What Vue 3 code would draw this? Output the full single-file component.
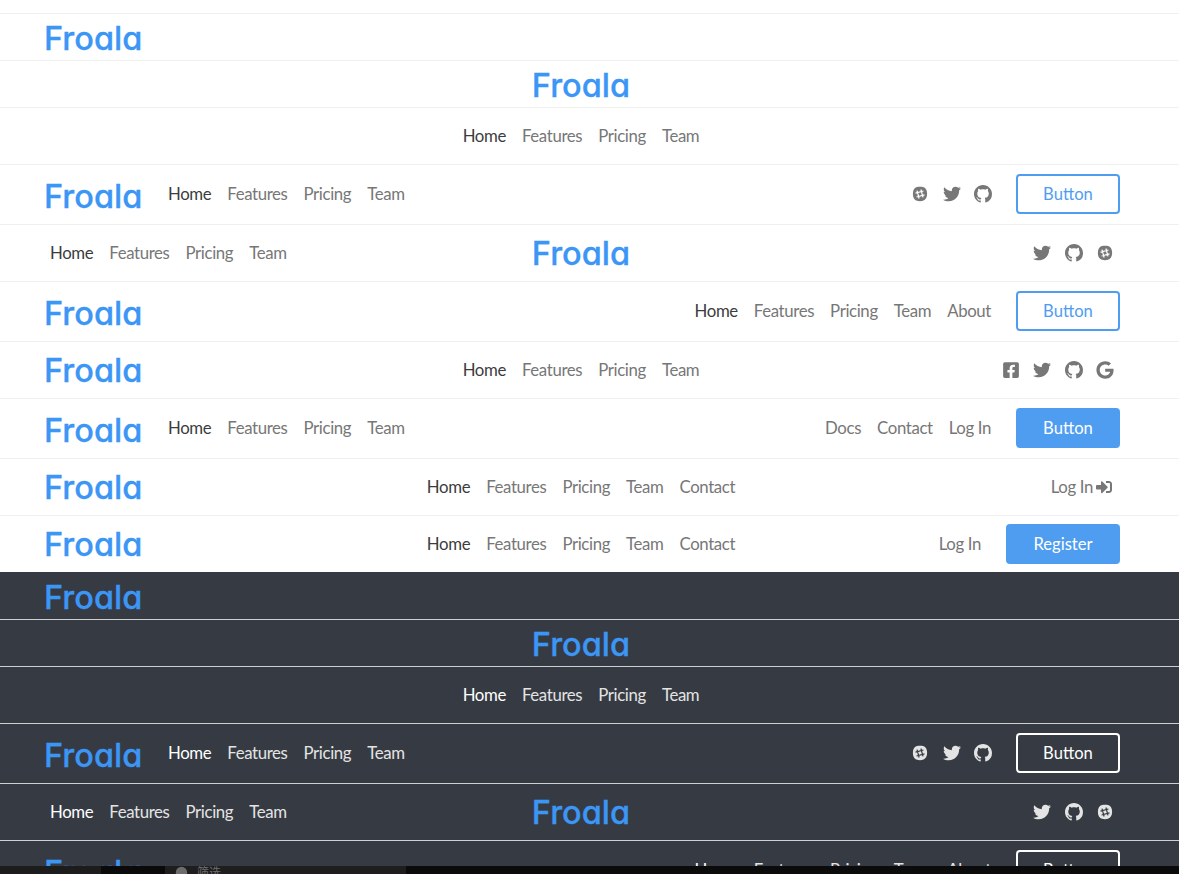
<script setup>
const basic = ['Home', 'Features', 'Pricing', 'Team'];
const contact = [...basic, 'Contact'];
const about = [...basic, 'About'];

// each row: height class, then what sits in the left / center / right cell
const rows = [
  { size: 'short', left: { logo: true } },
  { size: 'short', center: { logo: true } },
  { size: 'mid', center: { nav: basic } },
  { size: 'tall', left: { logo: true, nav: basic }, right: { icons: ['slack', 'twitter', 'github'], button: 'outline', label: 'Button' } },
  { size: 'mid', left: { nav: basic }, center: { logo: true }, right: { icons: ['twitter', 'github', 'slack'] } },
  { size: 'tall', left: { logo: true }, right: { nav: about, button: 'outline', label: 'Button' } },
  { size: 'mid', left: { logo: true }, center: { nav: basic }, right: { icons: ['facebook', 'twitter', 'github', 'google'] } },
  { size: 'tall', left: { logo: true, nav: basic }, right: { plain: ['Docs', 'Contact', 'Log In'], button: 'solid', label: 'Button' } },
  { size: 'mid', left: { logo: true }, center: { nav: contact }, right: { login: true } },
  { size: 'mid', left: { logo: true }, center: { nav: contact }, right: { plain: ['Log In'], button: 'solid wide', label: 'Register' } },
];

// the dark set runs off the bottom of the window after its sixth row
const themes = [
  { name: 'light', rows },
  { name: 'dark', rows: rows.slice(0, 6) },
];

const iconPaths = {
  twitter: { box: '0 0 512 512', d: 'M459.37 151.716c.325 4.548.325 9.097.325 13.645 0 138.72-105.583 298.558-298.558 298.558-59.452 0-114.68-17.219-161.137-47.106 8.447.974 16.568 1.299 25.34 1.299 49.055 0 94.213-16.568 130.274-44.832-46.132-.975-84.792-31.188-98.112-72.772 6.498.974 12.995 1.624 19.818 1.624 9.421 0 18.843-1.3 27.614-3.573-48.081-9.747-84.143-51.98-84.143-102.985v-1.299c13.969 7.797 30.214 12.67 47.431 13.319-28.264-18.843-46.781-51.005-46.781-87.391 0-19.492 5.197-37.36 14.294-52.954 51.655 63.675 129.3 105.258 216.365 109.807-1.624-7.797-2.599-15.918-2.599-24.04 0-57.828 46.782-104.934 104.934-104.934 30.213 0 57.502 12.67 76.67 33.137 23.715-4.548 46.456-13.32 66.599-25.34-7.798 24.366-24.366 44.833-46.132 57.827 21.117-2.273 41.584-8.122 60.426-16.243-14.292 20.791-32.161 39.308-52.628 54.253z' },
  facebook: { box: '0 0 448 512', d: 'M400 32H48A48 48 0 0 0 0 80v352a48 48 0 0 0 48 48h137.25V327.69h-63V256h63v-54.64c0-62.15 37-96.48 93.67-96.48 27.14 0 55.52 4.84 55.52 4.84v61h-31.27c-30.81 0-40.42 19.12-40.42 38.73V256h68.78l-11 71.69h-57.78V480H400a48 48 0 0 0 48-48V80a48 48 0 0 0-48-48z' },
  google: { box: '0 0 488 512', d: 'M488 261.8C488 403.3 391.1 504 248 504 110.8 504 0 393.2 0 256S110.8 8 248 8c66.8 0 123 24.5 166.3 64.9l-67.5 64.9C258.5 52.6 94.3 116.6 94.3 256c0 86.5 69.1 156.6 153.7 156.6 98.2 0 135-70.4 140.8-106.9H248v-85.3h236.1c2.3 12.7 3.9 24.9 3.9 41.4z' },
  github: { box: '0 0 16 16', d: 'M8 0C3.58 0 0 3.58 0 8c0 3.54 2.29 6.53 5.47 7.59.4.07.55-.17.55-.38 0-.19-.01-.82-.01-1.49-2.01.37-2.53-.49-2.69-.94-.09-.23-.48-.94-.82-1.13-.28-.15-.68-.52-.01-.53.63-.01 1.08.58 1.23.82.72 1.21 1.87.87 2.33.66.07-.52.28-.87.51-1.07-1.78-.2-3.64-.89-3.64-3.95 0-.87.31-1.59.82-2.15-.08-.2-.36-1.02.08-2.12 0 0 .67-.21 2.2.82.64-.18 1.32-.27 2-.27.68 0 1.36.09 2 .27 1.53-1.04 2.2-.82 2.2-.82.44 1.1.16 1.92.08 2.12.51.56.82 1.27.82 2.15 0 3.07-1.87 3.75-3.65 3.95.29.25.54.73.54 1.48 0 1.07-.01 1.93-.01 2.2 0 .21.15.46.55.38A8.013 8.013 0 0016 8c0-4.42-3.58-8-8-8z' },
};
const signIn = 'M416 448h-84c-6.6 0-12-5.4-12-12v-40c0-6.6 5.4-12 12-12h84c17.7 0 32-14.3 32-32V160c0-17.7-14.3-32-32-32h-84c-6.6 0-12-5.4-12-12V76c0-6.6 5.4-12 12-12h84c53 0 96 43 96 96v192c0 53-43 96-96 96zm-47-201L201 79c-15-15-41-4.5-41 17v96H24c-13.3 0-24 10.7-24 24v96c0 13.3 10.7 24 24 24h136v96c0 21.5 26 32 41 17l168-168c9.3-9.4 9.3-24.6 0-34z';
</script>

<template>
  <div class="page">
    <div class="top-gap"></div>
    <section v-for="theme in themes" :key="theme.name" :class="theme.name">
      <header v-for="(row, i) in theme.rows" :key="i" class="row" :class="row.size">
        <div v-for="cell in ['left', 'center', 'right']" :key="cell" class="cell" :class="cell">
          <template v-if="row[cell]">
            <span v-if="row[cell].logo" class="logo">Froala</span>
            <nav v-if="row[cell].nav" class="links">
              <a v-for="(link, n) in row[cell].nav" :key="link" :class="{ active: n === 0 }">{{ link }}</a>
            </nav>
            <nav v-if="row[cell].plain" class="links">
              <a v-for="link in row[cell].plain" :key="link">{{ link }}</a>
            </nav>
            <a v-if="row[cell].login" class="login">
              Log In
              <svg viewBox="0 0 512 512" width="16" height="16"><path :d="signIn" /></svg>
            </a>
            <div v-if="row[cell].icons" class="icons">
              <template v-for="icon in row[cell].icons" :key="icon">
                <svg v-if="icon === 'slack'" viewBox="0 0 24 24" width="18" height="18">
                  <path d="M8 2.8c2-.8 6-.8 8 0 3.500 1 5.500 4 5.500 9s-2 8-5.500 9.200c-2 .8-6 .8-8 0C4.500 20 2.500 17 2.500 12S4.500 3.800 8 2.800z" />
                  <path class="cut" transform="rotate(-15 12 12)" d="M9.300 6.500v11M14.700 6.500v11M6.500 9.300h11M6.500 14.700h11" />
                </svg>
                <svg v-else :viewBox="iconPaths[icon].box" width="18" height="18">
                  <path :d="iconPaths[icon].d" />
                </svg>
              </template>
            </div>
            <button v-if="row[cell].button" class="btn" :class="row[cell].button">{{ row[cell].label }}</button>
          </template>
        </div>
      </header>
    </section>
    <div class="taskbar">
      <span class="strip"></span>
      <span class="gap"></span>
      <span class="filter">
        <svg viewBox="0 0 16 16" width="13" height="13"><circle cx="8" cy="8" r="7" /></svg>
        筛选
      </span>
    </div>
  </div>
</template>

<style scoped>
.page {
  position: relative;
  height: 874px;
  overflow: hidden;
  font-family: Lato, "Noto Sans", sans-serif;
  background: #fff;
}

.top-gap {
  height: 13px;
}

.light {
  --link: #777;
  --active: #3c3c3c;
  --line: #f0f0f0;
  --cut: #fff;
  background: #fff;
}

.dark {
  --link: #e4e4e4;
  --active: #fff;
  --line: #cfd0d2;
  --cut: #363b43;
  background: #363b43;
}

.row {
  box-sizing: border-box;
  display: grid;
  grid-template-columns: 1fr auto 1fr;
  align-items: center;
  padding: 0 59px 1px 42px;
  border-top: 1px solid var(--line);
}

.dark .row:first-child {
  border-top-color: transparent;
}

.short { height: 47px; }
.mid { height: 57px; }
.tall { height: 60px; padding-bottom: 2px; }

.cell {
  display: flex;
  align-items: center;
}

.center { justify-content: center; }
.right { justify-content: flex-end; }

.logo {
  box-sizing: border-box;
  padding: 2px 2px 0;
  font-family: Inter, sans-serif;
  font-feature-settings: "cv11";
  font-size: 32.5px;
  font-weight: 500;
  line-height: 46px;
  color: #3b96f5;
  -webkit-text-stroke: 0.3px #3b96f5;
}

.tall .logo {
  padding-top: 6px;
}

.left .logo {
  width: 118px;
}

.links {
  display: flex;
  font-size: 16.8px;
  letter-spacing: -0.36px;
  line-height: 24px;
}

.links a,
.login {
  padding: 0 8px;
  color: var(--link);
}

.links a.active { color: var(--active); }

.login {
  display: flex;
  align-items: center;
  gap: 3px;
  font-size: 16.8px;
  letter-spacing: -0.36px;
}

.login svg,
.icons svg {
  fill: var(--link);
}

.icons {
  display: flex;
  align-items: center;
  gap: 13.5px;
  padding-right: 6px;
}

.icons .cut {
  fill: none;
  stroke: var(--cut);
  stroke-width: 1.6;
}

.btn {
  box-sizing: border-box;
  height: 40px;
  width: 104px;
  margin-left: 17px;
  padding: 0;
  border: 2px solid #4e9df1;
  border-radius: 4px;
  font-family: inherit;
  font-size: 16.6px;
}

.icons + .btn {
  margin-left: 18px;
}

.outline {
  background: transparent;
  color: #4e9df1;
}

.solid {
  background: #4e9df1;
  color: #fff;
}

.wide {
  width: 114px;
  margin-left: 17px;
}

.dark .outline {
  border-color: #fff;
  color: #fff;
}

.taskbar {
  position: absolute;
  left: 0;
  right: 0;
  bottom: 0;
  height: 8px;
  overflow: hidden;
  display: flex;
  background: #0b0b0b;
}

.strip {
  width: 101px;
  background: #1c1c1c;
}

.gap {
  width: 64px;
  background: #0a0a0a;
}

.filter {
  display: flex;
  align-items: flex-start;
  gap: 9px;
  width: 241px;
  padding-left: 10px;
  box-sizing: border-box;
  background: #1e1e1e;
  color: #6d6d6d;
  font-family: "Noto Sans CJK SC", sans-serif;
  font-size: 12px;
  line-height: 12px;
}

.filter svg {
  fill: #6d6d6d;
}
</style>
